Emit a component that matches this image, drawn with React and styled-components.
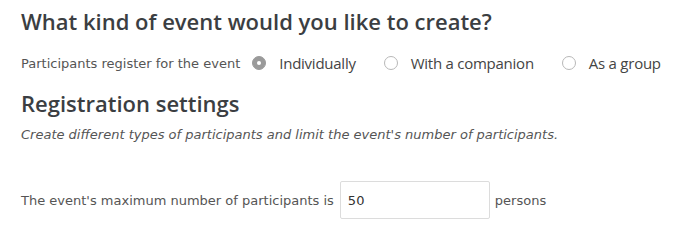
import React from 'react';
import styled, { createGlobalStyle } from 'styled-components';

const GlobalStyle = createGlobalStyle`
  body {
    margin: 0;
    background: #ffffff;
    font-family: "DejaVu Sans", Verdana, sans-serif;
  }
`;

const Page = styled.div`
  padding: 6px 21px 0 21px;
`;

const Title = styled.h2`
  margin: 0;
  font-family: "Open Sans", sans-serif;
  font-weight: 600;
  font-size: 22px;
  line-height: 30px;
  color: #3b3e42;
`;

const ChoiceRow = styled.div`
  display: flex;
  align-items: center;
  margin-top: 17px;
  height: 20px;
`;

const Label = styled.span`
  font-size: 13px;
  color: #555555;
  margin-right: 12px;
`;

const Option = styled.label`
  display: flex;
  align-items: center;
  margin-right: ${p => p.gap}px;
`;

const Radio = styled.span`
  width: 14px;
  height: 14px;
  box-sizing: border-box;
  border-radius: 50%;
  border: 1px solid ${p => (p.checked ? '#9a9a9a' : '#b8b8b8')};
  background: ${p => (p.checked ? '#9a9a9a' : '#ffffff')};
  display: flex;
  align-items: center;
  justify-content: center;
  margin-right: 13px;

  &::after {
    content: '';
    width: 4px;
    height: 4px;
    border-radius: 50%;
    background: #ffffff;
    display: ${p => (p.checked ? 'block' : 'none')};
  }
`;

const OptionText = styled.span`
  font-family: "Open Sans", sans-serif;
  font-size: 15px;
  color: #444444;
  letter-spacing: -0.25px;
`;

const SubTitle = styled(Title)`
  margin-top: 15px;
`;

const Hint = styled.p`
  margin: 9px 0 0 0;
  font-size: 13px;
  line-height: 16px;
  font-style: italic;
  color: #555555;
`;

const LimitRow = styled.div`
  display: flex;
  align-items: center;
  margin-top: 38px;
  font-size: 13px;
  color: #555555;
`;

const NumberInput = styled.input`
  width: 150px;
  height: 38px;
  box-sizing: border-box;
  margin: 0 5px 0 6px;
  padding: 0 7px;
  border: 1px solid #dcdcdc;
  border-radius: 2px;
  font-family: "DejaVu Sans", Verdana, sans-serif;
  font-size: 13px;
  color: #333333;
  outline: none;
`;

const options = [
  { text: 'Individually', checked: true, gap: 28 },
  { text: 'With a companion', checked: false, gap: 28 },
  { text: 'As a group', checked: false, gap: 0 },
];

export default function App() {
  return (
    <>
      <GlobalStyle />
      <Page>
        <Title>What kind of event would you like to create?</Title>
        <ChoiceRow>
          <Label>Participants register for the event</Label>
          {options.map(o => (
            <Option key={o.text} gap={o.gap}>
              <Radio checked={o.checked} />
              <OptionText>{o.text}</OptionText>
            </Option>
          ))}
        </ChoiceRow>
        <SubTitle>Registration settings</SubTitle>
        <Hint>
          Create different types of participants and limit the event's number of participants.
        </Hint>
        <LimitRow>
          The event's maximum number of participants is
          <NumberInput defaultValue="50" />
          persons
        </LimitRow>
      </Page>
    </>
  );
}
